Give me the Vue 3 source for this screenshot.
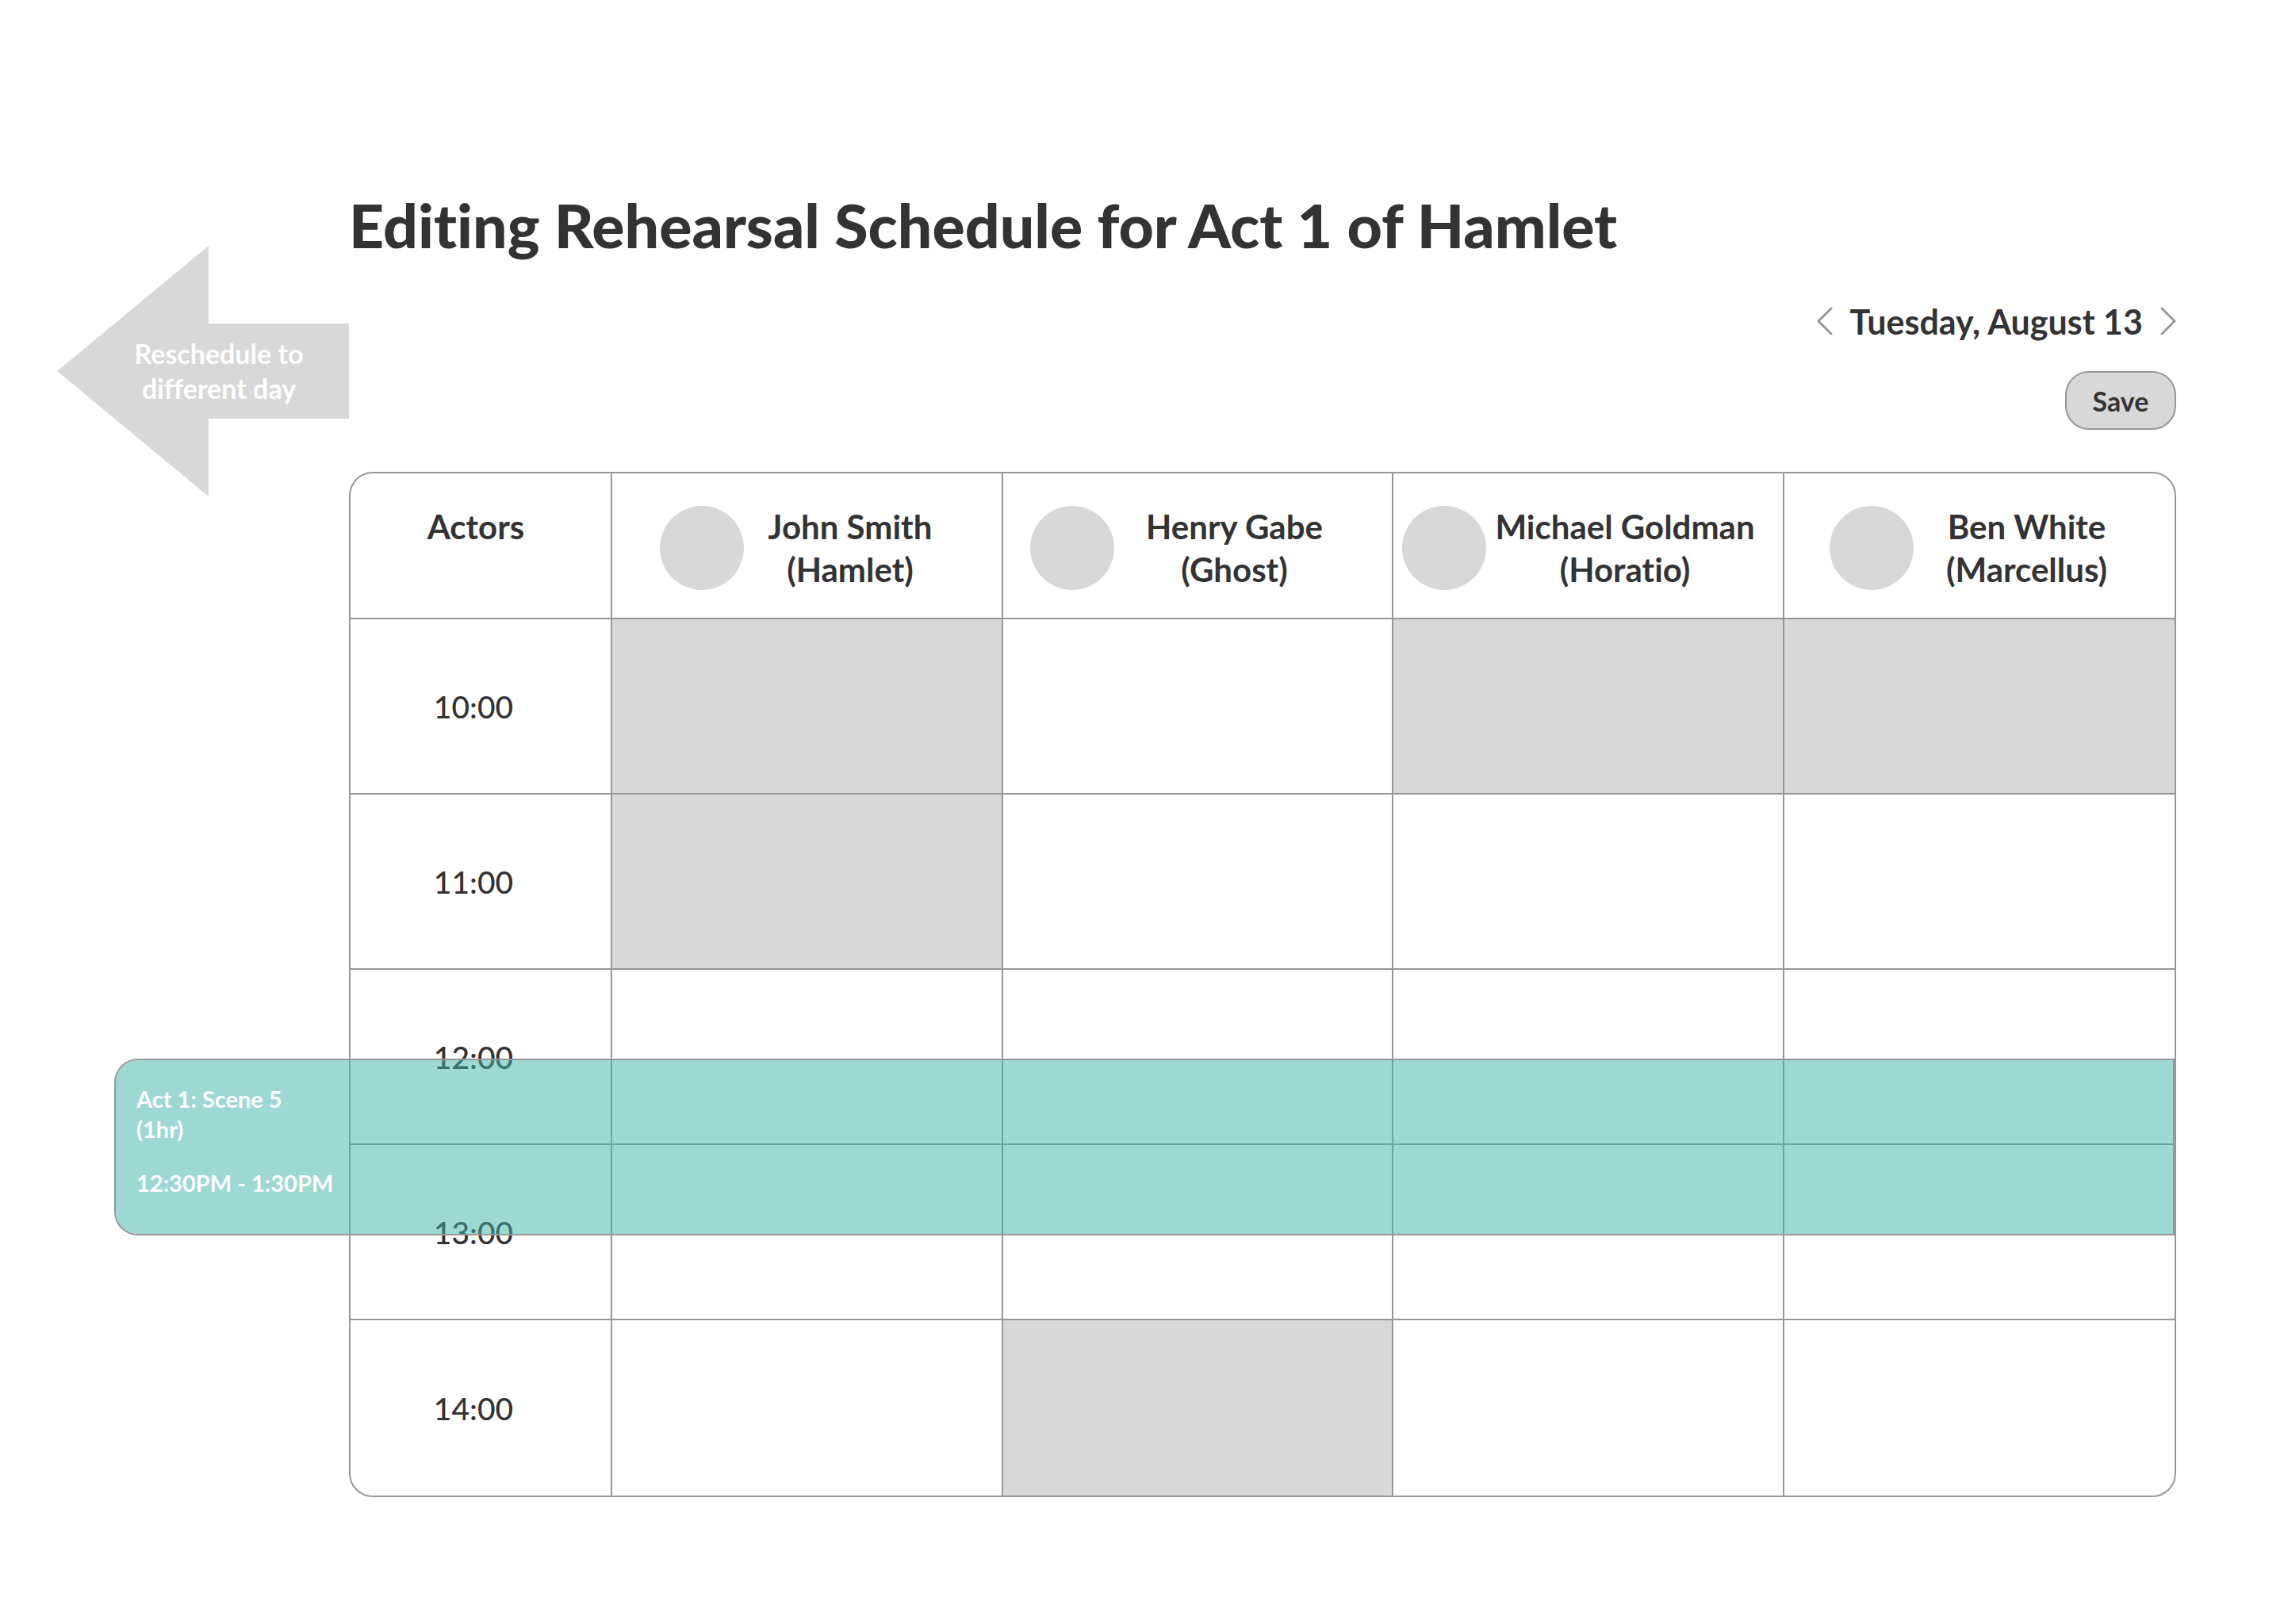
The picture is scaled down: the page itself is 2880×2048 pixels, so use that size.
<script setup>
const actors = [
  { name: 'John Smith', role: 'Hamlet', lead: 60, label: 268 },
  { name: 'Henry Gabe', role: 'Ghost', lead: 34, label: 304 },
  { name: 'Michael Goldman', role: 'Horatio', lead: 11, label: 350 },
  { name: 'Ben White', role: 'Marcellus', lead: 57, label: 286 },
]

// Each entry marks whether the actor in that column is unavailable
const hours = [
  { time: '10:00', busy: [true, false, true, true] },
  { time: '11:00', busy: [true, false, false, false] },
  { time: '12:00', busy: [false, false, false, false] },
  { time: '13:00', busy: [false, false, false, false] },
  { time: '14:00', busy: [false, true, false, false] },
]
</script>

<template>
  <main class="page">
    <aside class="side">
      <button class="reschedule" type="button">
        <svg class="reschedule-shape" viewBox="0 0 368 316" preserveAspectRatio="none" aria-hidden="true">
          <path d="M0 158 191 0V98H368V218H191V316Z" fill="#d8d8d8" />
        </svg>
        <span class="reschedule-text">Reschedule to<br />different day</span>
      </button>
    </aside>

    <div class="content">
      <h1 class="title">Editing Rehearsal Schedule for Act 1 of Hamlet</h1>

      <div class="toolbar">
        <div class="day">
          <button class="arrow" type="button" aria-label="Previous day">
            <svg width="20" height="38" viewBox="0 0 20 38" aria-hidden="true"><path d="M18 2 2 18 18 34" /></svg>
          </button>
          <span class="date">Tuesday, August 13</span>
          <button class="arrow" type="button" aria-label="Next day">
            <svg width="20" height="38" viewBox="0 0 20 38" aria-hidden="true"><path d="M2 2 18 18 2 34" /></svg>
          </button>
        </div>
        <button class="save" type="button">Save</button>
      </div>

      <section class="schedule">
        <div class="frame">
          <table class="grid">
            <colgroup>
              <col class="col-time" />
              <col v-for="a in actors" :key="a.name" />
            </colgroup>
            <thead>
              <tr>
                <th class="corner" scope="col">Actors</th>
                <th v-for="a in actors" :key="a.name" scope="col">
                  <div class="actor" :style="{ paddingLeft: a.lead + 'px' }">
                    <span class="avatar"></span>
                    <span class="label" :style="{ width: a.label + 'px' }">{{ a.name }}<br />({{ a.role }})</span>
                  </div>
                </th>
              </tr>
            </thead>
            <tbody>
              <tr v-for="h in hours" :key="h.time">
                <th class="time" scope="row">{{ h.time }}</th>
                <td v-for="(b, i) in h.busy" :key="i" :class="{ busy: b }"></td>
              </tr>
            </tbody>
          </table>
        </div>

        <article class="scene">
          <p>Act 1: Scene 5<br />(1hr)</p>
          <p>12:30PM - 1:30PM</p>
        </article>
      </section>
    </div>
  </main>
</template>

<style>
body {
  background: #fff;
}
</style>

<style scoped>
.page {
  display: grid;
  grid-template-columns: 368px 1fr;
  padding: 240px 136px 160px 72px;
  color: #333;
  font-family: Lato, "Open Sans", sans-serif;
  font-size: 42px;
  font-variant-ligatures: none;
}

button {
  margin: 0;
  padding: 0;
  border: 0;
  background: none;
  color: inherit;
  font: inherit;
  cursor: pointer;
}

.side {
  padding-top: 70px;
}

.reschedule {
  position: relative;
  width: 100%;
  height: 316px;
  padding-left: 40px;
  color: #fff;
  font-size: 34px;
  font-weight: 700;
  line-height: 44px;
}

.reschedule-shape {
  position: absolute;
  inset: 0;
  width: 100%;
  height: 100%;
}

.reschedule-text {
  position: relative;
}

.title {
  margin: 0;
  font-size: 77px;
  font-weight: 900;
  line-height: 86px;
}

.toolbar {
  display: flex;
  flex-direction: column;
  align-items: flex-end;
  gap: 36px;
  padding: 54px 0 53px;
}

.day {
  display: flex;
  align-items: center;
  gap: 22px;
  font-size: 43px;
  font-weight: 700;
  line-height: 52px;
}

.arrow {
  display: flex;
}

.arrow path {
  fill: none;
  stroke: #979797;
  stroke-width: 3;
  stroke-linecap: round;
}

.save {
  width: 140px;
  height: 74px;
  border: 2px solid #979797;
  border-radius: 30px;
  background: #d8d8d8;
  font-size: 34px;
  font-weight: 700;
}

.schedule {
  position: relative;
}

.frame {
  overflow: hidden;
  border: 2px solid #979797;
  border-radius: 30px;
}

.grid {
  width: 100%;
  border-collapse: separate;
  border-spacing: 0;
  table-layout: fixed;
}

.col-time {
  width: 330px;
}

.grid th,
.grid td {
  box-sizing: border-box;
  height: 221px;
  padding: 0;
  border-right: 2px solid #979797;
  border-bottom: 2px solid #979797;
}

.grid thead th {
  height: 184px;
  vertical-align: top;
  line-height: 54px;
}

.grid tr > :last-child {
  border-right: 0;
}

.grid tbody tr:last-child > * {
  border-bottom: 0;
}

.grid .corner {
  padding: 40px 12px 0 0;
  text-align: center;
}

.grid .time {
  padding-right: 18px;
  font-size: 39px;
  font-weight: 500;
  text-align: center;
}

.busy {
  background: #d8d8d8;
}

.actor {
  display: flex;
  align-items: center;
  padding-top: 40px;
}

.avatar {
  flex: none;
  width: 106px;
  height: 106px;
  border-radius: 50%;
  background: #d8d8d8;
}

.label {
  flex: none;
  text-align: center;
  white-space: nowrap;
}

.scene {
  position: absolute;
  top: 740px;
  right: 2px;
  left: -296px;
  box-sizing: border-box;
  height: 223px;
  padding: 30px 26px;
  border: 2px solid #979797;
  border-radius: 30px 0 0 30px;
  background: rgba(61, 177, 167, 0.5);
  background-clip: padding-box;
  color: #fff;
  font-size: 29px;
  font-weight: 700;
  line-height: 38px;
}

.scene p {
  margin: 0 0 30px;
}
</style>
